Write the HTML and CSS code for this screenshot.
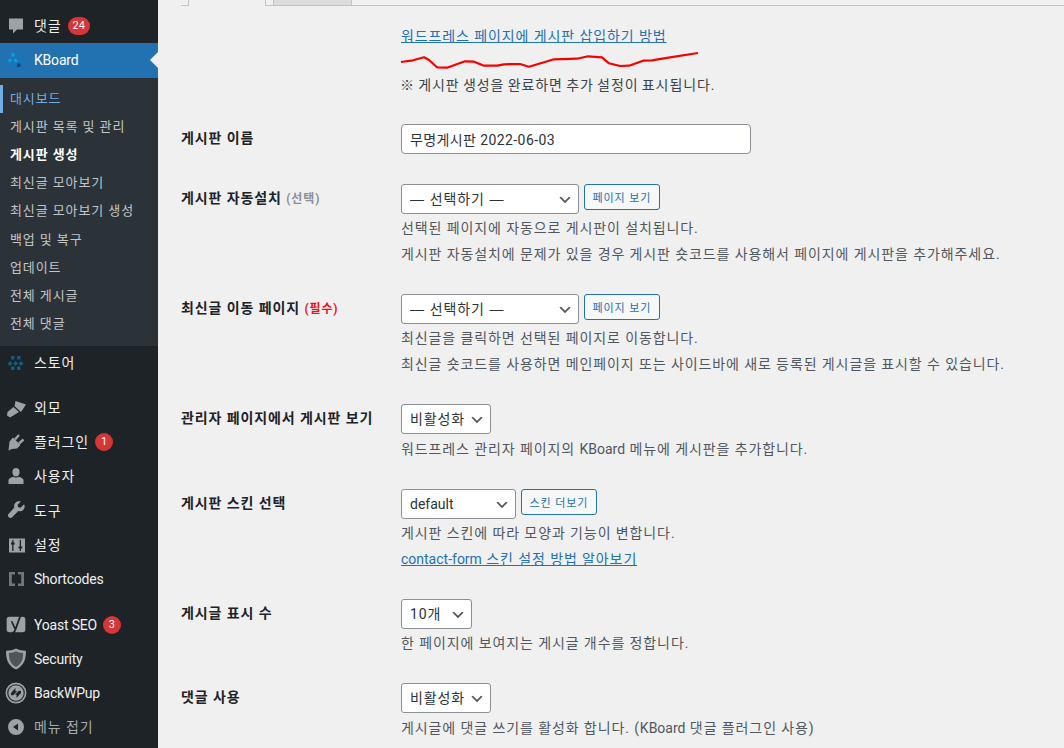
FILE: index.html
```html
<!DOCTYPE html>
<html lang="ko">
<head>
  <meta charset="UTF-8" />
  <meta name="viewport" content="width=device-width, initial-scale=1" />
  <title>게시판 생성</title>
  <link rel="stylesheet" href="styles.css">
</head>
<body>

<aside class="sidebar">
  <a class="menu-item">
    <svg class="menu-icon" viewBox="0 0 20 20"><path d="M3 2.500h14v11h-6l-4 4v-4H3z"/></svg>
    <span>댓글</span><span class="count">24</span>
  </a>
  <a class="menu-item current">
    <svg class="menu-icon" viewBox="0 0 20 20"><g fill="#00a0e0"><rect x="5" y="3" width="3.500" height="3.500"/><path d="M4 8l2.500 2.500L4 13l-2.500-2.500zM9.500 8l2.500 2.500L9.500 13 7 10.500z"/></g><g fill="#0a7cc4"><rect x="11" y="3" width="3.500" height="3.500"/><path d="M15 8l2.500 2.500L15 13l-2.500-2.500z"/><rect x="5" y="13.500" width="3.500" height="3.500"/></g><rect x="11" y="13.500" width="3.500" height="3.500" fill="#0b4a80"/></svg>
    <span class="latin">KBoard</span>
  </a>
  <ul class="submenu">
    <li class="active">대시보드</li>
    <li>게시판 목록 및 관리</li>
    <li class="bold">게시판 생성</li>
    <li>최신글 모아보기</li>
    <li>최신글 모아보기 생성</li>
    <li>백업 및 복구</li>
    <li>업데이트</li>
    <li>전체 게시글</li>
    <li>전체 댓글</li>
  </ul>
  <a class="menu-item">
    <svg class="menu-icon" viewBox="0 0 20 20"><g fill="#0f5c85"><rect x="5" y="3" width="3.500" height="3.500"/><rect x="11" y="3" width="3.500" height="3.500"/><path d="M4 8l2.500 2.500L4 13l-2.500-2.500zM9.500 8l2.500 2.500L9.500 13 7 10.500zM15 8l2.500 2.500L15 13l-2.500-2.500z"/><rect x="5" y="13.500" width="3.500" height="3.500"/><rect x="11" y="13.500" width="3.500" height="3.500"/></g></svg>
    <span>스토어</span>
  </a>
  <div class="menu-sep"></div>
  <a class="menu-item">
    <svg class="menu-icon" viewBox="0 0 20 20"><path d="M9.500 3L20 6.500 15 14l-6.500-6zM7.500 9l5.500 5-9 5.500-3-2 .5-3.500z"/></svg>
    <span>외모</span>
  </a>
  <a class="menu-item">
    <svg class="menu-icon" viewBox="0 0 20 20"><path d="M7 5.500l7.500 7.500-3.500 3.500-5 .5-3.500 1.500.5-4.500.5-4.500z"/><path d="M9 7.500l4-4.500M13 11.500l4.500-4" fill="none" stroke="#9ca2a7" stroke-width="2.400"/></svg>
    <span>플러그인</span><span class="count">1</span>
  </a>
  <a class="menu-item">
    <svg class="menu-icon" viewBox="0 0 20 20"><path d="M10 2c2.200 0 3.600 1.700 3.600 3.900S12.200 10.500 10 10.500 6.400 8.100 6.400 5.900 7.800 2 10 2zM2.500 18v-3.800c0-1.500 2.200-2.700 4.800-3.400 1.500 1.100 3.900 1.100 5.400 0 2.600.7 4.800 1.900 4.800 3.400V18z"/></svg>
    <span>사용자</span>
  </a>
  <a class="menu-item">
    <svg class="menu-icon" viewBox="0 0 20 20"><path d="M17.800 4.500l-3.300 3.200-2.400-.5-.5-2.400 3.300-3.200c-1.800-.7-4-.3-5.400 1.100-1.300 1.300-1.700 3.200-1.200 4.900L2.700 13.700c-1 1-1 2.500 0 3.500s2.500 1 3.500 0l6.100-6.100c1.700.5 3.600.1 4.900-1.200 1.400-1.400 1.800-3.600 1.100-5.400z"/></svg>
    <span>도구</span>
  </a>
  <a class="menu-item">
    <svg class="menu-icon" viewBox="0 0 20 20"><rect x="3" y="3.500" width="16" height="14"/><path d="M6.200 5v2.500H5v2h1.200V16h1.300V9.500h1.200v-2H7.500V5zM13.700 5v6.500h-1.200v2h1.200V16H15v-2.500h1.200v-2H15V5z" fill="#1d2327"/></svg>
    <span>설정</span>
  </a>
  <a class="menu-item">
    <svg class="menu-icon" viewBox="0 0 20 20"><path d="M3 3h6v2.600H5.800v8.800H9V17H3zM12 3h6v14h-6v-2.600h3.200V5.600H12z" fill="#72777c"/></svg>
    <span class="latin">Shortcodes</span>
  </a>
  <div class="menu-sep wide"></div>
  <a class="menu-item">
    <svg class="menu-icon big" viewBox="0 0 20 20"><rect x="1.500" y="3.500" width="17" height="14" rx="2.500"/><path d="M6 7.500l3.500 7.500c-.5 2-1.500 3-3 3.500M14.500 1L9.500 15" fill="none" stroke="#1d2327" stroke-width="1.600"/></svg>
    <span class="latin">Yoast SEO</span><span class="count">3</span>
  </a>
  <a class="menu-item">
    <svg class="menu-icon big" viewBox="0 0 20 20"><path d="M10 .5c2.500 1.500 5.500 2 9 2 .2 7.500-1.500 13.500-9 17-7.500-3.500-9.200-9.500-9-17 3.500 0 6.500-.5 9-2z"/><path d="M10 3c2 1 4 1.500 6.500 1.600C16.500 10.500 15 14.800 10 17.200 5 14.800 3.500 10.500 3.500 4.600 6 4.500 8 4 10 3z" fill="#4f5459"/></svg>
    <span class="latin">Security</span>
  </a>
  <a class="menu-item">
    <svg class="menu-icon big" viewBox="0 0 20 20"><path fill-rule="evenodd" d="M10 .5a9.500 9.500 0 1 1 0 19 9.500 9.500 0 0 1 0-19zM10 2a8 8 0 1 0 0 16 8 8 0 0 0 0-16z"/><circle cx="10" cy="10" r="7"/><path d="M5.500 10l4-4.500v2.800h1.500L7.500 12H5.500zM14.500 10l-4 4.500v-2.800H9l3.500-3.700h2z" fill="#1d2327"/></svg>
    <span class="latin">BackWPup</span>
  </a>
  <a class="menu-item collapse">
    <svg class="menu-icon" viewBox="0 0 20 20"><path fill-rule="evenodd" d="M10 2a8 8 0 1 1 0 16 8 8 0 0 1 0-16zm2 4.500L7 10l5 3.500z"/></svg>
    <span>메뉴 접기</span>
  </a>
</aside>

<main class="content">
  <div class="tabs">
    <div class="tab-active"></div>
    <div class="tab-other"></div>
  </div>

  <svg class="scribble" viewBox="0 0 300 20"><polyline points="1,12 13,10.300 24,7.300 29,10 37,17.300 47,17.700 65,11.300 74,11.700 84,15.700 97,15.700 104,14.300 120,14 129,16.700 154,9.300 177,8.700 188,6.300 202,7.300 209,13.300 220,16 229,15.700 243,10.700 252,10.300 270,7.300 298,3" fill="none" stroke="#f90000" stroke-width="2.200" stroke-linejoin="round"/></svg>

  <div class="row intro">
    <div class="field">
      <a class="link" href="#">워드프레스 페이지에 게시판 삽입하기 방법</a>
      <p class="desc note">※ 게시판 생성을 완료하면 추가 설정이 표시됩니다.</p>
    </div>
  </div>

  <div class="row name-row">
    <label class="label">게시판 이름</label>
    <div class="field">
      <input class="input" type="text" value="무명게시판 2022-06-03">
    </div>
  </div>

  <div class="row">
    <label class="label">게시판 자동설치 <small>(선택)</small></label>
    <div class="field">
      <div class="controls">
        <select class="select page-select"><option>— 선택하기 —</option></select>
        <button class="btn">페이지 보기</button>
      </div>
      <p class="desc">선택된 페이지에 자동으로 게시판이 설치됩니다.</p>
      <p class="desc">게시판 자동설치에 문제가 있을 경우 게시판 숏코드를 사용해서 페이지에 게시판을 추가해주세요.</p>
    </div>
  </div>

  <div class="row">
    <label class="label">최신글 이동 페이지 <small class="required">(필수)</small></label>
    <div class="field">
      <div class="controls">
        <select class="select page-select"><option>— 선택하기 —</option></select>
        <button class="btn">페이지 보기</button>
      </div>
      <p class="desc">최신글을 클릭하면 선택된 페이지로 이동합니다.</p>
      <p class="desc">최신글 숏코드를 사용하면 메인페이지 또는 사이드바에 새로 등록된 게시글을 표시할 수 있습니다.</p>
    </div>
  </div>

  <div class="row">
    <label class="label">관리자 페이지에서 게시판 보기</label>
    <div class="field">
      <div class="controls tall">
        <select class="select toggle-select"><option>비활성화</option></select>
      </div>
      <p class="desc">워드프레스 관리자 페이지의 <span class="latin">KBoard</span> 메뉴에 게시판을 추가합니다.</p>
    </div>
  </div>

  <div class="row">
    <label class="label">게시판 스킨 선택</label>
    <div class="field">
      <div class="controls">
        <select class="select skin-select"><option>default</option></select>
        <button class="btn">스킨 더보기</button>
      </div>
      <p class="desc">게시판 스킨에 따라 모양과 기능이 변합니다.</p>
      <p class="desc"><a class="link" href="#"><span class="latin">contact-form</span> 스킨 설정 방법 알아보기</a></p>
    </div>
  </div>

  <div class="row">
    <label class="label">게시글 표시 수</label>
    <div class="field">
      <div class="controls">
        <select class="select count-select"><option>10개</option></select>
      </div>
      <p class="desc">한 페이지에 보여지는 게시글 개수를 정합니다.</p>
    </div>
  </div>

  <div class="row">
    <label class="label">댓글 사용</label>
    <div class="field">
      <div class="controls tall">
        <select class="select toggle-select"><option>비활성화</option></select>
      </div>
      <p class="desc">게시글에 댓글 쓰기를 활성화 합니다. (<span class="latin">KBoard</span> 댓글 플러그인 사용)</p>
    </div>
  </div>
</main>

</body>
</html>
```

FILE: styles.css
```css
* {
  box-sizing: border-box;
}

html, body {
  height: 100%;
}

body {
  margin: 0;
  display: flex;
  overflow: hidden;
  background-color: #f0f0f1;
  color: #3c434a;
  font-family: Roboto, "Noto Sans CJK KR", sans-serif;
  font-size: 14px;
  line-height: 26px;
  letter-spacing: 0.9px;
}

.latin {
  letter-spacing: 0;
}

/* Sidebar */
.sidebar {
  flex: 0 0 158px;
  height: 748px;
  padding-top: 9px;
  background-color: #1d2327;
  color: #f0f0f1;
  overflow: hidden;
}

.menu-item {
  position: relative;
  display: flex;
  align-items: center;
  height: 34.3px;
  padding-left: 34px;
  font-size: 14px;
}

.menu-item .latin {
  letter-spacing: -0.2px;
}

.menu-icon {
  position: absolute;
  left: 6px;
  top: 7px;
  width: 20px;
  height: 20px;
  fill: #9ca2a7;
}

.menu-icon.big {
  left: 5px;
  top: 6px;
  width: 22px;
  height: 22px;
}

.menu-item.current {
  background-color: #2271b1;
  color: #fff;
}

.menu-item.current::after {
  content: "";
  position: absolute;
  right: 0;
  top: 9px;
  border: 8px solid transparent;
  border-right-color: #f0f0f1;
  border-left-width: 0;
}

.menu-item.collapse {
  color: #a7aaad;
}

.count {
  display: inline-block;
  min-width: 18px;
  height: 18px;
  margin-left: 6px;
  padding: 0 5px;
  border-radius: 9px;
  background-color: #d63638;
  color: #fff;
  font-size: 11px;
  line-height: 18px;
  letter-spacing: 0;
  text-align: center;
}

.menu-sep {
  height: 10px;
}

.menu-sep.wide {
  height: 11px;
}

.submenu {
  margin: 0;
  padding: 7px 0 8px;
  list-style: none;
  background-color: #2c3338;
  color: #c3c4c7;
  font-size: 13px;
}

.submenu li {
  height: 28.2px;
  padding-left: 10px;
  line-height: 28px;
}

.submenu li.active {
  color: #72aee6;
  box-shadow: inset 3px 0 0 #72aee6;
}

.submenu li.bold {
  color: #fff;
  font-weight: 700;
}

/* Main form */
.content {
  position: relative;
  flex: 1;
  padding-left: 23px;
}

.tabs {
  display: flex;
  height: 6px;
  margin-right: -1px;
  border-bottom: 1px solid #c3c4c7;
}

.tab-active {
  width: 78px;
  height: 6px;
  margin-left: 7px;
  border-right: 1px solid #c3c4c7;
  border-left: 1px solid #c3c4c7;
  background-color: #f0f0f1;
}

.tab-other {
  width: 79px;
  height: 5px;
  margin-left: 7px;
  border-right: 1px solid #c3c4c7;
  border-left: 1px solid #c3c4c7;
  background-color: #dcdcde;
}

.scribble {
  position: absolute;
  left: 242px;
  top: 50px;
  width: 300px;
  height: 20px;
}

.row {
  display: flex;
  padding: 15px 0 12px;
}

.row.intro {
  padding: 17px 0 11px 220px;
}

.row.name-row {
  padding-bottom: 15px;
}

.label {
  flex: 0 0 220px;
  padding-top: 4px;
  color: #1d2327;
  font-weight: 700;
  line-height: 20px;
}

.label small {
  color: #8c8f94;
  font-size: 12px;
  font-weight: 700;
}

.label .required {
  color: #e8141c;
}

.field {
  flex: 1;
}

.link {
  color: #2271b1;
  text-decoration: underline;
}

.desc {
  margin: 0;
  color: #50575e;
}

.note {
  margin-top: 23px;
  margin-left: -1px;
  color: #3c434a;
  word-spacing: -1px;
}

.input {
  display: block;
  width: 350px;
  height: 30px;
  padding: 0 8px;
  border: 1px solid #8c8f94;
  border-radius: 4px;
  background-color: #fff;
  color: #2c3338;
  font: inherit;
  letter-spacing: 0.4px;
}

.controls {
  display: flex;
  align-items: flex-start;
  gap: 5px;
  height: 31px;
}

.controls.tall {
  height: 32px;
}

.select {
  height: 30px;
  padding: 0 24px 0 8px;
  border: 1px solid #8c8f94;
  border-radius: 3px;
  background: #fff url("data:image/svg+xml;charset=US-ASCII,%3Csvg%20width%3D%2220%22%20height%3D%2220%22%20xmlns%3D%22http%3A%2F%2Fwww.w3.org%2F2000%2Fsvg%22%3E%3Cpath%20d%3D%22M5%206l5%205%205-5%202%201-7%207-7-7%202-1z%22%20fill%3D%22%23555%22%2F%3E%3C%2Fsvg%3E") no-repeat right 5px top 55%;
  background-size: 16px 16px;
  color: #2c3338;
  font: inherit;
  letter-spacing: inherit;
  appearance: none;
}

.page-select {
  width: 178px;
  font-family: "Liberation Sans", "Noto Sans CJK KR", sans-serif;
}

.toggle-select {
  width: 90px;
}

.skin-select {
  width: 115px;
  letter-spacing: 0;
}

.count-select {
  width: 71px;
}

.btn {
  height: 26px;
  padding: 0 7.500px;
  border: 1px solid #2271b1;
  border-radius: 3px;
  background-color: #f6f7f7;
  color: #2271b1;
  font-family: inherit;
  font-size: 11px;
  letter-spacing: inherit;
  white-space: nowrap;
}
```
